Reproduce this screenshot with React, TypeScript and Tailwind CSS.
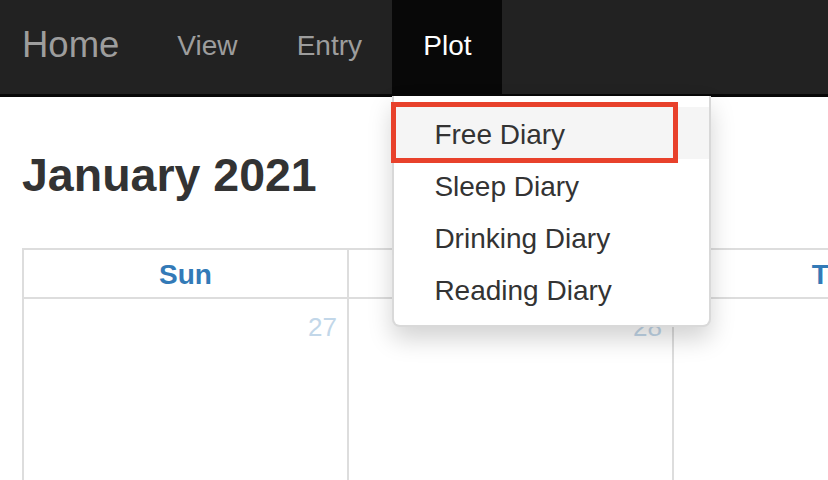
import React from "react";

const navFont = "font-['Liberation_Sans','Helvetica','Arial',sans-serif]";

export default function App() {
  const items = ["Free Diary", "Sleep Diary", "Drinking Diary", "Reading Diary"];
  return (
    <div className={`relative w-[828px] h-[480px] overflow-hidden bg-white ${navFont}`}>
      {/* Navbar */}
      <nav className="relative z-20 flex h-[97px] bg-[#222222] border-b-[3px] border-[#080808]">
        <a className="flex items-center pb-[3px] pl-[22px] pr-[29px] text-[36.5px] leading-none text-[#9d9d9d]">
          Home
        </a>
        <a className="flex w-[118px] items-center justify-center pb-[3px] text-[28px] leading-none text-[#9d9d9d]">
          View
        </a>
        <a className="flex w-[126px] items-center justify-center pb-[3px] text-[28px] leading-none text-[#9d9d9d]">
          Entry
        </a>
        <div className="relative flex w-[110px] items-center justify-center bg-[#080808] pb-[3px] text-[28px] leading-none text-white">
          Plot
          {/* Dropdown */}
          <div className="absolute left-0 top-[96px] w-[319px] rounded-b-[8px] border-2 border-t-0 border-[rgba(0,0,0,0.15)] bg-white pt-[11px] pb-[10px] shadow-[0_12px_24px_rgba(0,0,0,0.175)]">
            {items.map((t, i) => (
              <div
                key={t}
                className={`flex h-[52px] items-center px-[40px] pt-[4px] text-[28px] leading-none text-[#333333] ${
                  i === 0 ? "bg-[#f5f5f5]" : ""
                }`}
              >
                {t}
              </div>
            ))}
          </div>
        </div>
      </nav>

      {/* Red highlight annotation */}
      <div className="absolute left-[391px] top-[102px] z-30 h-[61px] w-[287px] border-[5px] border-[#e8412b]" />

      {/* Content */}
      <main className="pl-[22px] pt-[55px]">
        <h2 className="text-[46.5px] font-bold leading-none text-[#333333]">January 2021</h2>
        <div className="mt-[49px] grid w-[1000px] grid-cols-[325px_325px_325px] border-l-2 border-t-2 border-[#dddddd]">
          {["Sun", "Mon", "Tue"].map((d) => (
            <div
              key={d}
              className="flex h-[49px] items-center justify-center border-b-2 border-r-2 border-[#dddddd] pt-[3px] text-[28px] font-bold leading-none text-[#337ab7]"
            >
              {d}
            </div>
          ))}
          {["27", "28", "29"].map((n) => (
            <div
              key={n}
              className="h-[240px] border-b-2 border-r-2 border-[#dddddd] pr-[10px] pt-[15px] text-right text-[26px] leading-none text-[#c2d7e9]"
            >
              {n}
            </div>
          ))}
        </div>
      </main>
    </div>
  );
}
